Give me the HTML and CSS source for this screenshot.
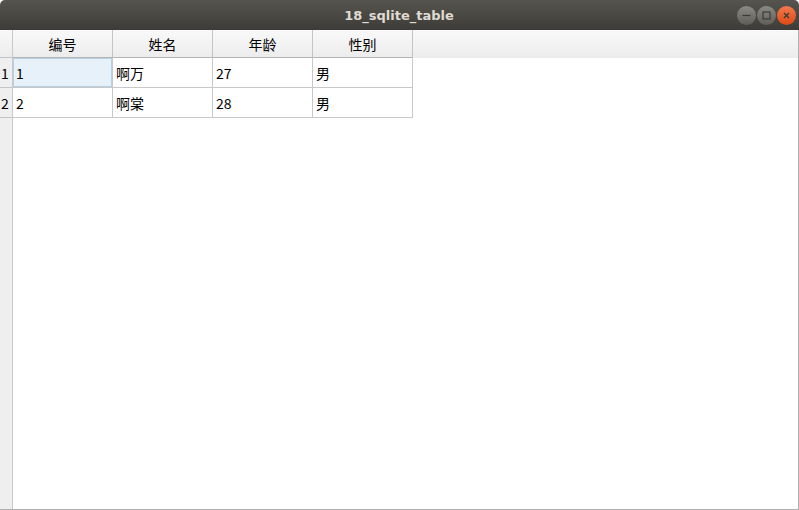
FILE: index.html
```html
<!DOCTYPE html>
<html>
<head>
<meta charset="utf-8">
<link rel="stylesheet" href="styles.css">
</head>
<body>
<div class="window">
  <div class="titlebar">
    <span class="title">18_sqlite_table</span>
    <div class="controls">
      <span class="btn min"><svg width="19" height="19" viewBox="0 0 19 19"><line x1="5.5" y1="9.5" x2="13.5" y2="9.5" stroke="#3c3b37" stroke-width="1.2"/></svg></span>
      <span class="btn max"><svg width="19" height="19" viewBox="0 0 19 19"><rect x="6" y="6" width="7" height="7" fill="none" stroke="#3c3b37" stroke-width="1.2"/></svg></span>
      <span class="btn close"><svg width="19" height="19" viewBox="0 0 19 19"><path d="M7 7 L12 12 M12 7 L7 12" stroke="#3c3b37" stroke-width="1.3"/></svg></span>
    </div>
  </div>
  <div class="content">
    <div class="vheader">
      <div class="corner"></div>
      <div class="rnum">1</div>
      <div class="rnum">2</div>
    </div>
    <div class="main">
      <div class="hrow">
        <div class="hcell">编号</div>
        <div class="hcell">姓名</div>
        <div class="hcell">年龄</div>
        <div class="hcell">性别</div>
      </div>
      <div class="grid">
        <div class="cell sel">1</div>
        <div class="cell">啊万</div>
        <div class="cell">27</div>
        <div class="cell">男</div>
        <div class="cell">2</div>
        <div class="cell">啊棠</div>
        <div class="cell">28</div>
        <div class="cell">男</div>
      </div>
    </div>
  </div>
</div>
</body>
</html>
```

FILE: styles.css
```css
* { box-sizing: border-box; }
html, body { margin: 0; padding: 0; }
body {
  width: 799px;
  height: 510px;
  overflow: hidden;
  font-family: "Noto Sans CJK SC", "Noto Sans", sans-serif;
  font-size: 14px;
  color: #000;
}
.window {
  width: 799px;
  height: 510px;
  display: flex;
  flex-direction: column;
}
.titlebar {
  height: 30px;
  background: linear-gradient(#56544e, #3d3c38);
  border-radius: 5px 5px 0 0;
  display: flex;
  align-items: center;
  justify-content: center;
  position: relative;
}
.title {
  font-family: "DejaVu Sans", sans-serif;
  font-weight: bold;
  font-size: 13px;
  color: #dfdbd2;
  margin-left: -1px;
}
.controls {
  position: absolute;
  right: 3px;
  top: 6px;
  display: flex;
  gap: 1px;
}
.btn {
  width: 19px;
  height: 19px;
  border-radius: 50%;
  display: flex;
  background: linear-gradient(#8c8a85, #5f5d58);
}
.btn svg { display: block; }
.btn.close { background: linear-gradient(#f27a4e, #dd4814); }
.content {
  flex: 1;
  display: flex;
  border-right: 1px solid #b0b0b0;
  border-bottom: 1px solid #b0b0b0;
  background: #fff;
}
.vheader {
  width: 13px;
  background: #efefef;
  border-right: 1px solid #c8c8c8;
  display: flex;
  flex-direction: column;
}
.corner {
  height: 28px;
  background: linear-gradient(#f9f9f9, #ececec);
  border-bottom: 1px solid #c4c4c4;
}
.rnum {
  height: 30px;
  border-bottom: 1px solid #c4c4c4;
  display: flex;
  align-items: center;
  padding-left: 1px;
}
.main {
  flex: 1;
  display: flex;
  flex-direction: column;
}
.hrow {
  height: 28px;
  display: flex;
  background: linear-gradient(#f9f9f9, #ececec);
}
.hcell {
  width: 100px;
  border-right: 1px solid #c4c4c4;
  border-bottom: 1px solid #b4b4b4;
  display: flex;
  align-items: center;
  justify-content: center;
  padding-top: 1px;
}
.grid {
  display: grid;
  grid-template-columns: repeat(4, 100px);
  grid-auto-rows: 30px;
  width: 400px;
}
.cell {
  border-right: 1px solid #c8c8c8;
  border-bottom: 1px solid #c8c8c8;
  display: flex;
  align-items: center;
  padding-left: 3px;
}
.cell.sel {
  background: #e6f1fa;
  box-shadow: inset 0 0 0 1px #b7cfe3;
}
```
